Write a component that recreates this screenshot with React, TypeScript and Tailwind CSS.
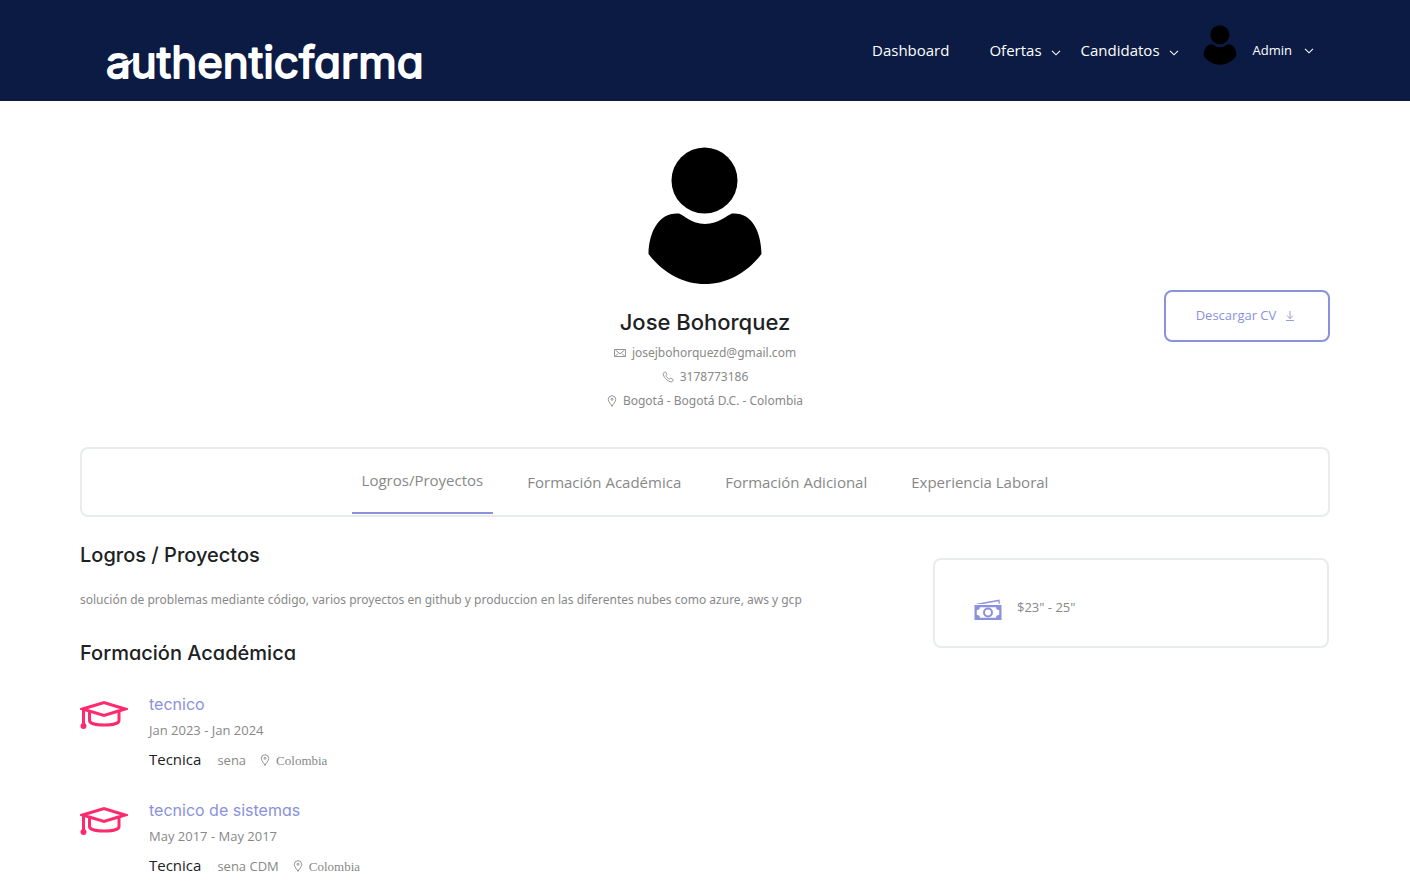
import type { ReactNode } from "react";

const heading = "font-[Inter,sans-serif] [font-feature-settings:'cv11']";

function Avatar({ className }: { className: string }) {
  return (
    <svg viewBox="0 0 114 138" className={className} fill="#000" aria-hidden="true">
      <circle cx="56.5" cy="33.5" r="33" />
      <path d="M31 66.5C36 68 43 77 57 77s22-9 27-10.500C103 65 113 83 113.500 107C98 127 78 137 57 137S16 127 0.500 107C1 83 12 65 31 66.500Z" />
    </svg>
  );
}

function Chevron({ className = "" }: { className?: string }) {
  return (
    <svg viewBox="0 0 10 6" className={`h-[6px] w-[10px] ${className}`} fill="none" stroke="#fff" strokeWidth="1.100" aria-hidden="true">
      <path d="M1 0.800L5 4.800L9 0.800" />
    </svg>
  );
}

function Pin({ className = "" }: { className?: string }) {
  return (
    <svg viewBox="0 0 10 12" className={`h-3 w-[10px] ${className}`} fill="none" stroke="#888" strokeWidth="0.900" aria-hidden="true">
      <path d="M5 11.400C4.200 9.300 1.300 7 1.300 4.400a3.700 3.700 0 0 1 7.400 0C8.700 7 5.800 9.300 5 11.400Z" />
      <circle cx="5" cy="4.300" r="1" />
    </svg>
  );
}

function Mail() {
  return (
    <svg viewBox="0 0 12 8" className="h-2 w-3" fill="none" stroke="#888" strokeWidth="0.900" aria-hidden="true">
      <path d="M0.500 0.500h11v7h-11zM1.500 1.200L6 4.800L10.500 1.200M1.500 7L4 4.500M10.500 7L8 4.500" />
    </svg>
  );
}

function Phone() {
  return (
    <svg viewBox="0 0 12 12" className="h-3 w-3" fill="none" stroke="#888" strokeWidth="0.900" strokeLinejoin="round" aria-hidden="true">
      <path d="M2.800 1L1.200 2.300C0.700 5.500 5.800 11 9.500 10.900L11.200 9.500C11.500 9 11.200 8.700 10.800 8.400L9 7.300C8.300 7 8 7.600 7.400 8.100C6.200 7.700 4.400 5.800 4 4.800C4.500 4.200 5.200 3.900 4.800 3.200L3.700 1.200C3.400 0.800 3.100 0.800 2.800 1Z" />
    </svg>
  );
}

function Download() {
  return (
    <svg viewBox="0 0 8 10" className="h-[10px] w-2" fill="none" stroke="#8b91dd" strokeWidth="0.900" aria-hidden="true">
      <path d="M4 0v7.500M1 4.600L4 7.600L7 4.600M0 9.500h8" />
    </svg>
  );
}

function GraduationCap() {
  return (
    <svg viewBox="0 0 48 30" className="h-[30px] w-12 shrink-0" fill="none" stroke="#ff2a6d" strokeWidth="3" aria-hidden="true">
      <path d="M2.500 9L24 2.500L45 9L24 15.500Z" />
      <path d="M9.500 11V20.500C9.500 26.500 39 26.500 39 20.500V11" />
      <path d="M3.500 8V25" />
      <circle cx="3.500" cy="26" r="3" fill="#ff2a6d" stroke="none" />
    </svg>
  );
}

function Money() {
  return (
    <svg viewBox="0 0 28 22" className="h-[22px] w-7" fill="#8b91dd" aria-hidden="true">
      <path d="M1 5L25.500 0.500L26 4.500H24.500V2.300L9 5Z" />
      <path fillRule="evenodd" d="M0.500 6H27.500V21H0.500ZM6 8.300A3 3 0 0 1 2.800 11V16A3 3 0 0 1 6 18.700H22A3 3 0 0 1 25.200 16V11A3 3 0 0 1 22 8.300Z" />
      <circle cx="14" cy="13.500" r="4" fill="none" stroke="#8b91dd" strokeWidth="2" />
    </svg>
  );
}

function Logo() {
  return (
    <a href="#" aria-label="authenticfarma" className="block">
      <svg viewBox="0 0 350 56" className="h-14 w-[350px]" fill="#fff" stroke="#fff" strokeWidth="1.800" strokeLinejoin="round" fontFamily="Inter, sans-serif" fontSize="44" fontWeight="400" aria-hidden="true">
        <text x="0" y="42">
          a<tspan className="[font-feature-settings:'cv11']">uthenticfarma</tspan>
        </text>
        <path d="M2 29C9 22 18 27 25 21" fill="none" stroke="#0c1b44" strokeWidth="1.500" strokeLinecap="round" />
        <path d="M2 33C9 24 20 30 29 21C26 28 21 31 15 31S6 31 2 33Z" stroke="none" />
      </svg>
    </a>
  );
}

function ContactLine({ icon, children }: { icon: ReactNode; children: ReactNode }) {
  return (
    <p className="flex h-6 items-center justify-center gap-[6px] font-['Noto_Sans',sans-serif] text-[12px]">
      {icon}
      {children}
    </p>
  );
}

const studies = [
  { title: "tecnico", dates: "Jan 2023 - Jan 2024", level: "Tecnica", school: "sena", place: "Colombia" },
  { title: "tecnico de sistemas", dates: "May 2017 - May 2017", level: "Tecnica", school: "sena CDM", place: "Colombia" },
];

const tabs = ["Formación Académica", "Formación Adicional", "Experiencia Laboral"];

export default function App() {
  return (
    <div className="bg-white font-['Open_Sans',sans-serif] text-[13px] text-[#888]">
      <header className="bg-[#0c1b44] text-white">
        <div className="mx-auto flex h-[101px] max-w-[1250px] items-center justify-between pr-4 pl-[26px]">
          <div className="pt-[26px]">
            <Logo />
          </div>
          <nav className="flex items-center text-[15px]">
            <a href="#" className="mr-10">Dashboard</a>
            <button type="button" className="mr-5 flex items-center gap-[9px]">
              Ofertas
              <Chevron className="mt-1" />
            </button>
            <button type="button" className="mr-6 flex items-center gap-[9px]">
              Candidatos
              <Chevron className="mt-1" />
            </button>
            <button type="button" className="flex items-center text-[13px]">
              <Avatar className="mr-4 mb-3 h-10 w-[34px]" />
              Admin
              <Chevron className="ml-3" />
            </button>
          </nav>
        </div>
      </header>

      <main className="mx-auto max-w-[1250px] pt-[46px]">
        <section className="grid grid-cols-[1fr_auto_1fr] items-end">
          <div className="col-start-2 text-center">
            <Avatar className="mx-auto h-[138px] w-[114px]" />
            <h1 className={`${heading} mt-[21px] mb-[3px] text-[22px] leading-8 font-medium text-[#202124]`}>Jose Bohorquez</h1>
            <ContactLine icon={<Mail />}>josejbohorquezd@gmail.com</ContactLine>
            <ContactLine icon={<Phone />}>3178773186</ContactLine>
            <ContactLine icon={<Pin />}>Bogotá - Bogotá D.C. - Colombia</ContactLine>
          </div>
          <button type="button" className="mb-[71px] flex h-[52px] w-[166px] items-center justify-center gap-[10px] justify-self-end rounded-lg border-2 border-[#8b91dd] pr-1 text-[#8b91dd]">
            Descargar CV
            <Download />
          </button>
        </section>

        <nav className="mt-[34px] flex h-[70px] items-stretch justify-center gap-6 rounded-lg border-2 border-[#e8ecec] text-[15px]">
          <a href="#logros" className="mb-px flex items-center border-b-2 border-[#8b91dd] px-[10px]">Logros/Proyectos</a>
          {tabs.map((tab) => (
            <a key={tab} href="#formacion" className="flex items-center px-[10px]">{tab}</a>
          ))}
        </nav>

        <div className="flex items-start justify-between gap-10">
          <div className="flex-1">
            <h2 id="logros" className={`${heading} mt-6 text-[20px] leading-7 font-medium text-[#202124]`}>Logros / Proyectos</h2>
            <p className="mt-[19px] font-['Noto_Sans',sans-serif] text-[12px] leading-6">
              solución de problemas mediante código, varios proyectos en github y produccion en las diferentes nubes como azure, aws y gcp
            </p>
            <h2 id="formacion" className={`${heading} mt-[27px] text-[20px] leading-7 font-medium text-[#202124]`}>Formación Académica</h2>
            <ul className="mt-[23px]">
              {studies.map((study) => (
                <li key={study.title} className="mb-[18px] flex gap-[21px]">
                  <div className="pt-[10px]">
                    <GraduationCap />
                  </div>
                  <div>
                    <h3 className={`${heading} text-[16px] leading-7 text-[#8b91dd]`}>{study.title}</h3>
                    <p className="leading-6">{study.dates}</p>
                    <p className="flex items-baseline leading-[34px]">
                      <span className="mr-4 text-[15px] text-[#202124]">{study.level}</span>
                      <span className="mr-[14px]">{study.school}</span>
                      <Pin className="self-center" />
                      <span className="ml-[6px] font-['Liberation_Serif',serif]">{study.place}</span>
                    </p>
                  </div>
                </li>
              ))}
            </ul>
          </div>
          <aside className="mt-[41px] mr-px flex h-[90px] w-[396px] items-center gap-[15px] rounded-lg border-2 border-[#e8ecec] px-[39px] pt-[14px]">
            <Money />
            <span className="pb-1">$23" - 25"</span>
          </aside>
        </div>
      </main>
    </div>
  );
}
